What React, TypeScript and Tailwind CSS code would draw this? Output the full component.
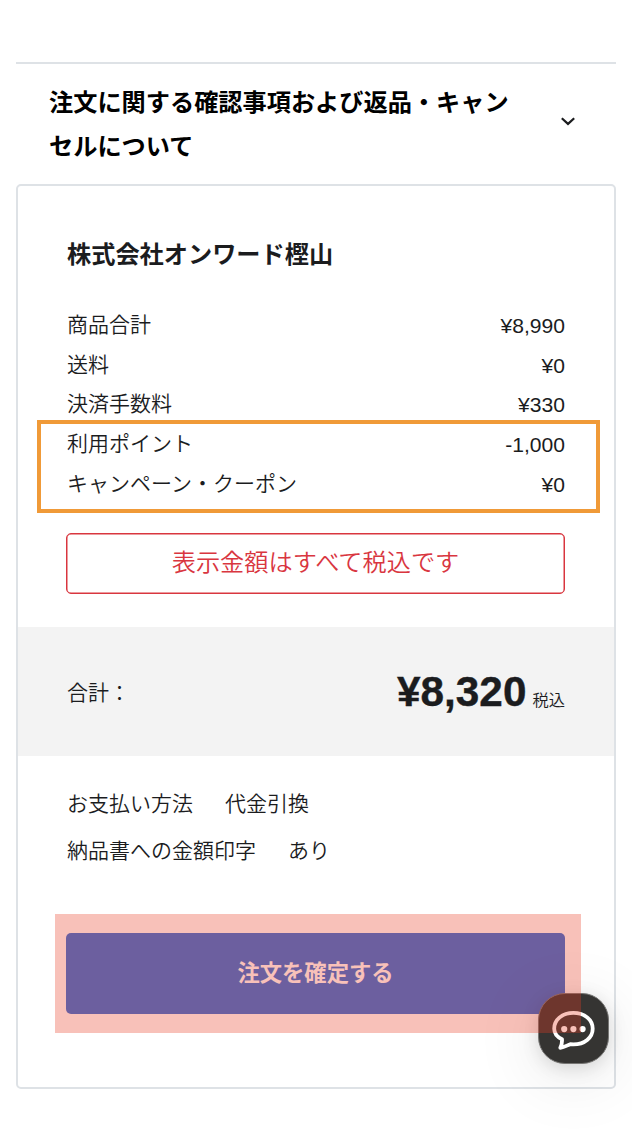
const costs = [
  { label: '商品合計', value: '¥8,990' },
  { label: '送料', value: '¥0' },
  { label: '決済手数料', value: '¥330' },
  { label: '利用ポイント', value: '-1,000' },
  { label: 'キャンペーン・クーポン', value: '¥0' },
];

function Terms() {
  return (
    <section className="flex h-[122px] items-center justify-between border-t-2 border-[#dee2e6] pr-[41px] pl-[33px]">
      <h2 className="w-[475px] pt-[2px] text-[24.2px] leading-[44px] font-bold text-black">
        注文に関する確認事項および返品・キャンセルについて
      </h2>
      <svg className="mb-[5px] h-[9px] w-[14px]" viewBox="0 0 14 9" fill="none" stroke="#1b1c1e" strokeWidth="2.2">
        <path d="M0.8 1.3 7 6.9 13.2 1.3" />
      </svg>
    </section>
  );
}

function ChatButton() {
  return (
    <button
      aria-label="チャット"
      className="absolute top-[993px] left-[538px] h-[71px] w-[71px] rounded-[27px] border border-[#777674] bg-[#353432] shadow-[0_12px_70px_rgba(0,0,0,0.11),0_4px_18px_rgba(0,0,0,0.13)]"
    >
      <svg className="absolute top-[15px] left-[12px] h-[42px] w-[44px]" viewBox="0 0 44 42" fill="none">
        <path
          d="M11 30.3C5.6 27.6 3.2 23.5 3.2 19.7 3.2 10.7 11.4 3.8 22.4 3.8s19.3 6.9 19.3 15.9-8.3 15.7-19.3 15.7l-3.2-.2c-2.4.8-5.8 3.3-9.9 3.7 1.3-2.8 2-5.1 1.7-8.6Z"
          stroke="white"
          strokeWidth="3.8"
          strokeLinejoin="round"
        />
        <circle cx="13.2" cy="20.1" r="3.1" fill="white" />
        <circle cx="22.4" cy="20.1" r="3.1" fill="white" />
        <circle cx="31.6" cy="20.1" r="3.1" fill="white" />
      </svg>
    </button>
  );
}

export default function App() {
  return (
    <main className="relative h-[1144px] w-[632px] overflow-hidden bg-white px-4 pt-[62px] font-['Liberation_Sans','Noto_Sans_CJK_JP',sans-serif] text-[21px] font-[350] text-[#1b1c1e]">
      <Terms />
      <section className="h-[905px] w-[600px] rounded-[5px] border-2 border-[#dee2e6]">
        <h3 className="px-[49px] pt-[47px] text-[24.2px] leading-[44px] font-bold">株式会社オンワード樫山</h3>
        <dl className="mt-[28px] px-[49px]">
          {costs.map((item) => (
            <div key={item.label} className="flex h-[39.7px] items-center justify-between">
              <dt className="leading-[32px]">{item.label}</dt>
              <dd className="pt-[2px] text-[21.1px] leading-[32px]">{item.value}</dd>
            </div>
          ))}
        </dl>
        <div className="mx-[48px] mt-[29.5px] flex h-[61px] w-[499px] items-center justify-center rounded-[5px] border border-[#d9363f] text-[24.2px] text-[#d9363f] shadow-[inset_0_0_0_0.5px_#d9363f]">
          表示金額はすべて税込です
        </div>
        <div className="mt-[33px] flex h-[129px] items-center justify-between bg-[#f3f3f3] px-[49px] pt-[2px]">
          <span>合計：</span>
          <span className="flex items-baseline gap-[6px]">
            <strong className="text-[42.3px] leading-[60px] [-webkit-text-stroke:0.4px]">¥8,320</strong>
            <small className="text-[16.3px]">税込</small>
          </span>
        </div>
        <dl className="px-[49px] pt-[24px] leading-[47px]">
          <div className="flex gap-[32px]">
            <dt>お支払い方法</dt>
            <dd>代金引換</dd>
          </div>
          <div className="flex gap-[32px]">
            <dt>納品書への金額印字</dt>
            <dd>あり</dd>
          </div>
        </dl>
        <button className="mx-[48px] mt-[59px] flex h-[81px] w-[499px] items-center justify-center rounded-[5px] bg-[#3370d9] text-[22.3px] font-bold text-white">
          注文を確定する
        </button>
      </section>
      <ChatButton />
      <div className="pointer-events-none absolute top-[420px] left-[37px] h-[93px] w-[563px] border-4 border-[#f09a38]" />
      <div className="pointer-events-none absolute top-[914px] left-[55px] h-[119px] w-[526px] bg-[rgba(233,60,35,0.317)]" />
    </main>
  );
}
